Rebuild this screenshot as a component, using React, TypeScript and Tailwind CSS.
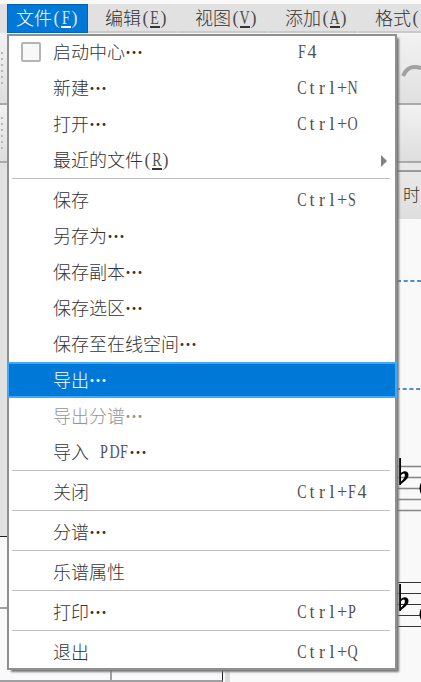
import { Fragment } from "react";
import clsx from "clsx";

type Entry = {
  label: string;
  shortcut?: string;
  icon?: boolean;
  submenu?: boolean;
  active?: boolean;
  disabled?: boolean;
};

const menus = ["编辑(E)", "视图(V)", "添加(A)", "格式("];

const groups: Entry[][] = [
  [
    { label: "启动中心…", shortcut: "F4", icon: true },
    { label: "新建…", shortcut: "Ctrl+N" },
    { label: "打开…", shortcut: "Ctrl+O" },
    { label: "最近的文件(R)", submenu: true },
  ],
  [
    { label: "保存", shortcut: "Ctrl+S" },
    { label: "另存为…" },
    { label: "保存副本…" },
    { label: "保存选区…" },
    { label: "保存至在线空间…" },
    { label: "导出…", active: true },
    { label: "导出分谱…", disabled: true },
    { label: "导入 PDF…" },
  ],
  [{ label: "关闭", shortcut: "Ctrl+F4" }],
  [{ label: "分谱…" }],
  [{ label: "乐谱属性" }],
  [{ label: "打印…", shortcut: "Ctrl+P" }],
  [{ label: "退出", shortcut: "Ctrl+Q" }],
];

// Half-width glyphs sit in fixed 10px cells, like the system's bitmap font
function Label({ text }: { text: string }) {
  return (
    <span className="flex h-6 whitespace-pre">
      {text.split(/([\x20-\x7e…])/).filter(Boolean).map((part, i, all) => {
        if (part === "…") return <span key={i} className="-mt-px h-6 font-bold">{part}</span>;
        if (!/^[\x20-\x7e]$/.test(part)) return <span key={i} className="-mt-px h-6">{part}</span>;
        const mnemonic = all[i - 1] === "(";
        return (
          <span
            key={i}
            className={clsx(
              "flex h-6 justify-center font-['Liberation_Serif',serif]",
              /[()]/.test(part) || mnemonic ? "w-[9px]" : "w-[10px]",
              mnemonic && "relative after:absolute after:bottom-[2px] after:h-[2px] after:w-[10px] after:bg-current"
            )}
          >
            <span className={clsx("inline-block opacity-85", /[A-Z]/.test(part) && "scale-x-[0.78]")}>{part}</span>
          </span>
        );
      })}
    </span>
  );
}

function MenuItem({ item }: { item: Entry }) {
  return (
    <div
      className={clsx(
        "flex h-9 items-center",
        item.active && "bg-[#0078d7] text-white shadow-[inset_0_0_0_2px_#42a8fa]",
        item.disabled ? "text-[#949494]" : !item.active && "text-[#333]"
      )}
    >
      <div className="flex w-[46px] pl-[14px]">
        {item.icon && <span className="size-5 rounded-[2px] border-2 border-[#b4b4b4] bg-[#f8f8f8]" />}
      </div>
      <div className="w-[244px]">
        <Label text={item.label} />
      </div>
      {item.shortcut && <Label text={item.shortcut} />}
      {item.submenu && (
        <svg className="mt-0.5 ml-[84px] h-3 w-1.5 text-[#818181]" viewBox="0 0 6 12" fill="currentColor">
          <path d="M0 0 6 6 0 12Z" />
        </svg>
      )}
    </div>
  );
}

function Grip({ count }: { count: number }) {
  return (
    <div className="flex flex-col gap-1">
      {Array.from({ length: count }, (_, i) => (
        <span key={i} className="ml-px size-0.5 bg-[#b8b8b8]" />
      ))}
    </div>
  );
}

function Staff({ dark }: { dark?: boolean }) {
  return (
    <svg className="h-[60px] w-full shrink-0" viewBox="0 0 24 60">
      <path
        d="M0 12.5H24M0 23.5H24M0 34.5H24M0 45.5H24M0 56.5H24"
        stroke={dark ? "#333" : "#858585"}
        strokeWidth={dark ? 1 : 1.6}
      />
      <g transform={dark ? "translate(0 10)" : undefined}>
        <path d="M3 4V31" stroke="#000" strokeWidth="2" />
        <path
          fillRule="evenodd"
          d="M3 20C6 16 11.5 16.5 11.5 21 11.5 25.5 6 28 3 31ZM4 21.5V27.5C7 25 8.4 22.5 7.8 20.5 7.2 18.6 5 19.5 4 21.5Z"
        />
        <path d="M25 27Q20 34 25 42Z" />
      </g>
    </svg>
  );
}

export default function App() {
  return (
    <div className="relative flex h-[682px] w-[421px] flex-col overflow-hidden bg-[#f9f9f9] pt-1 font-['Noto_Sans_CJK_SC',sans-serif] text-[18px] leading-6 font-light text-[#333]">
      <nav className="flex h-[30px] shrink-0 border-b border-[#f5f5f5] bg-[#e1e1e1] pl-[7px]">
        <div className="flex w-[81px] shrink-0 items-center border border-[#0065b5] bg-[#0078d7] pb-0.5 pl-2 text-white">
          <Label text="文件(F)" />
        </div>
        {menus.map((menu) => (
          <div
            key={menu}
            className="mr-px flex w-[89px] shrink-0 items-center border-b-2 border-[#c9c9c9] pl-[17px]"
          >
            <Label text={menu} />
          </div>
        ))}
      </nav>

      <div className="flex min-h-0 flex-1">
        <aside className="flex w-[230px] flex-col">
          <div className="h-[71px] border-b-2 border-[#aaa] bg-linear-to-b from-[#f2f2f2] to-[#dedede] pt-[18px]">
            <Grip count={6} />
          </div>
          <div className="h-[58px] border-b-2 border-[#aaa] bg-linear-to-b from-[#f2f2f2] to-[#dedede] pt-3">
            <Grip count={6} />
          </div>
          <div className="h-[374px] border-b border-[#222] bg-[#e1e1e1]" />
          <div className="h-[72px] border-b-2 border-[#a0a0a4]" />
          <div className="flex h-[73px] border-r-[5px] border-[#dcdcdc]">
            <div className="w-[112px] border-r-2 border-b-2 border-[#a0a0a4]" />
            <div className="w-[111px] border-r border-b-2 border-r-[#222] border-b-[#a0a0a4]" />
          </div>
        </aside>
        <main className="flex flex-1 justify-end">
          <div className="flex w-6 flex-col">
            <div className="h-[71px] shrink-0 border-b-2 border-[#aaa] bg-linear-to-b from-[#f2f2f2] to-[#e0e0e0]">
              <svg className="mt-7 ml-1 h-5 w-5" viewBox="0 0 20 20" fill="none" stroke="#a0a0a0" strokeWidth="4">
                <path d="M2 14Q6 5 13 5 17 5 20 6" />
              </svg>
            </div>
            <div className="h-[58px] shrink-0 border-b-2 border-[#aaa] bg-linear-to-b from-[#f2f2f2] to-[#dedede]" />
            <div className="h-[9px] shrink-0 border-b-2 border-[#999] bg-[#e8e8e8]" />
            <div className="flex h-[47px] shrink-0 items-center bg-linear-to-b from-[#e8e8e8] to-[#dedede] pb-[3px] pl-[6px] text-[17px]">
              时
            </div>
            <svg className="h-[235px] w-6 shrink-0" viewBox="0 0 24 235" stroke="#4f8ad6" strokeWidth="1.8" strokeDasharray="4 2.7">
              <path d="M0 62H24M-1 170H24" />
            </svg>
            <Staff />
            <div className="h-14 shrink-0" />
            <Staff dark />
          </div>
        </main>
      </div>

      <div className="absolute top-[34px] left-[7px] h-[636px] w-[390px] bg-white shadow-[inset_0_0_0_2px_#8f8f8f,3px_3px_2px_-1px_#777]">
        {groups.map((group, i) => (
          <Fragment key={i}>
            {i > 0 && <hr className="mr-[7px] mb-[3px] ml-[5px] border-t border-[#bfbfbf]" />}
            {group.map((item) => (
              <MenuItem key={item.label} item={item} />
            ))}
          </Fragment>
        ))}
      </div>
    </div>
  );
}
